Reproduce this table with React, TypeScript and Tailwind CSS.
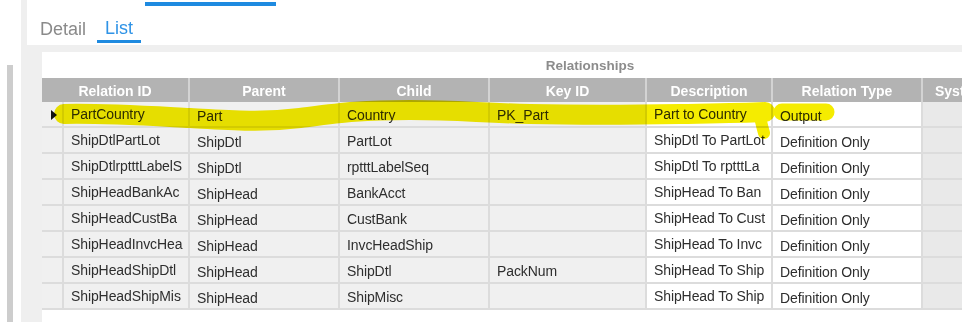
import { Fragment } from 'react'

type Col = { key: string; label: string; w: string; cell: string; pad: string }

const cols: Col[] = [
  { key: 'id', label: 'Relation ID', w: 'w-[126px]', cell: 'bg-[#f0f0f0]', pad: 'pt-[2px]' },
  { key: 'parent', label: 'Parent', w: 'w-[150px]', cell: 'bg-[#f0f0f0]', pad: 'pt-[4px]' },
  { key: 'child', label: 'Child', w: 'w-[150px]', cell: 'bg-[#f0f0f0]', pad: 'pt-[3px]' },
  { key: 'key', label: 'Key ID', w: 'w-[157px]', cell: 'bg-[#f0f0f0]', pad: 'pt-[3px]' },
  { key: 'desc', label: 'Description', w: 'w-[126px]', cell: 'bg-white', pad: 'pt-[2px]' },
  { key: 'type', label: 'Relation Type', w: 'w-[150px]', cell: 'bg-white', pad: 'pt-[4px]' },
  { key: 'sys', label: 'Syst', w: 'w-[215px]', cell: 'bg-[#e9e9e9]', pad: 'pt-[3px]' },
]

// values as the grid shows them, clipped by the column width
const rows: Record<string, string>[] = [
  { id: 'PartCountry', parent: 'Part', child: 'Country', key: 'PK_Part', desc: 'Part to Country', type: 'Output' },
  { id: 'ShipDtlPartLot', parent: 'ShipDtl', child: 'PartLot', key: '', desc: 'ShipDtl To PartLot', type: 'Definition Only' },
  { id: 'ShipDtlrptttLabelS', parent: 'ShipDtl', child: 'rptttLabelSeq', key: '', desc: 'ShipDtl To rptttLa', type: 'Definition Only' },
  { id: 'ShipHeadBankAc', parent: 'ShipHead', child: 'BankAcct', key: '', desc: 'ShipHead To Ban', type: 'Definition Only' },
  { id: 'ShipHeadCustBa', parent: 'ShipHead', child: 'CustBank', key: '', desc: 'ShipHead To Cust', type: 'Definition Only' },
  { id: 'ShipHeadInvcHea', parent: 'ShipHead', child: 'InvcHeadShip', key: '', desc: 'ShipHead To Invc', type: 'Definition Only' },
  { id: 'ShipHeadShipDtl', parent: 'ShipHead', child: 'ShipDtl', key: 'PackNum', desc: 'ShipHead To Ship', type: 'Definition Only' },
  { id: 'ShipHeadShipMis', parent: 'ShipHead', child: 'ShipMisc', key: '', desc: 'ShipHead To Ship', type: 'Definition Only' },
]

export default function App() {
  return (
    <div className="relative flex h-[322px] w-[962px] overflow-hidden bg-white font-['Liberation_Sans',Arial,sans-serif]">
      {/* left gutter with scrollbar */}
      <div className="flex w-[27px] shrink-0">
        <div className="ml-[7px] mt-[65px] w-[6px] bg-[#cdcdcd]" />
        <div className="ml-[8px] w-[6px] bg-[#efefef]" />
      </div>

      <div className="flex min-w-0 flex-1 flex-col">
        {/* top tab strip, cut off */}
        <div className="h-[8px]">
          <div className="ml-[118px] mt-[2px] h-[4px] w-[131px] bg-[#1e8ae0]" />
        </div>

        {/* sub tabs */}
        <div className="flex h-[37px] items-start text-[18px]">
          <div className="ml-[13px] pt-[9px] leading-[24px] text-[#8a8a8a]">Detail</div>
          <div className="ml-[11px] border-b-[3px] border-[#1e8ae0] px-[8px] pt-[9px] leading-[23px] text-[#2f93e6]">
            List
          </div>
        </div>

        {/* grid area */}
        <div className="flex-1 bg-[#efefef] pl-[15px] pt-[7px]">
          <div className="h-full w-[1096px] bg-white">
            <div className="h-[26px] pt-[1px] text-center text-[13.5px] font-bold leading-[26px] text-[#8c8c8c]">
              Relationships
            </div>

            {/* header */}
            <div className="flex h-[24px] bg-[#b3b3b3] text-[14px] font-bold leading-[24px] text-white">
              {cols.map((c, i) => (
                <div
                  key={c.key}
                  className={[
                    i === 0 ? 'w-[148px]' : c.w,
                    c.key === 'sys' ? 'pl-[12px] text-left' : 'text-center',
                    'shrink-0 border-r-2 border-[#d3d3d3] pt-[1px] whitespace-nowrap',
                  ].join(' ')}
                >
                  {c.label}
                </div>
              ))}
            </div>

            {/* rows */}
            {rows.map((r, ri) => (
              <div key={ri} className="flex h-[26px] text-[14px] leading-[20px] text-[#2e2e2e]">
                <div className="w-[22px] shrink-0 border-b-2 border-r-2 border-[#dcdcdc] bg-[#f0f0f0] pl-[9px] pt-[8px]">
                  {ri === 0 && (
                    <svg width="6" height="10" viewBox="0 0 6 10">
                      <path d="M0 0 L6 5 L0 10 Z" fill="#111" />
                    </svg>
                  )}
                </div>
                {cols.map((c) => (
                  <Fragment key={c.key}>
                    <div
                      className={[
                        c.w,
                        c.cell,
                        c.pad,
                        'shrink-0 whitespace-nowrap border-b-2 border-r-2 border-[#dcdcdc] pl-[7px] tracking-[-0.1px]',
                      ].join(' ')}
                    >
                      {r[c.key] ?? ''}
                    </div>
                  </Fragment>
                ))}
              </div>
            ))}
          </div>
        </div>
      </div>

      {/* highlighter annotation */}
      <svg
        className="pointer-events-none absolute inset-0 mix-blend-multiply"
        width="962"
        height="322"
        viewBox="0 0 962 322"
      >
        <path
          d="M64 114 C 100 113, 150 116, 190 118 S 260 123, 300 118 S 360 110, 410 110 S 480 113, 530 114 S 620 115, 680 114 S 745 113, 765 112"
          fill="none"
          stroke="#f5ec00"
          strokeWidth="20"
          strokeLinecap="round"
        />
        <path d="M759 110 C 760 118, 762 126, 764 133" fill="none" stroke="#f5ec00" strokeWidth="12" strokeLinecap="round" />
        <path d="M782 112 L 826 112" fill="none" stroke="#f5ec00" strokeWidth="17" strokeLinecap="round" />
      </svg>
    </div>
  )
}
